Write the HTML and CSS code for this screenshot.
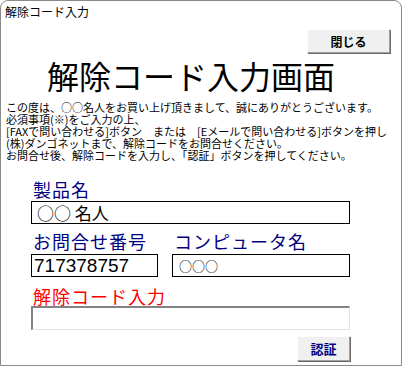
FILE: index.html
```html
<!DOCTYPE html>
<html lang="ja">
<head>
  <meta charset="UTF-8" />
  <meta name="viewport" content="width=device-width, initial-scale=1" />
  <title>解除コード入力</title>
  <link rel="stylesheet" href="styles.css">
</head>
<body>
  <div class="window">
    <div class="titlebar">解除コード入力</div>

    <div class="toolbar">
      <button class="btn close-btn" id="closeBtn">閉じる</button>
    </div>

    <h1>解除コード入力画面</h1>

    <div class="notice">
      この度は、○○名人をお買い上げ頂きまして、誠にありがとうございます。<br>
      必須事項(※)をご入力の上、<br>
      [FAXで問い合わせる]ボタン　または　[Eメールで問い合わせる]ボタンを押し<br>
      (株)ダンゴネットまで、解除コードをお問合せください。<br>
      お問合せ後、解除コードを入力し、「認証」ボタンを押してください。
    </div>

    <div class="form">
      <div class="field">
        <label class="label">製品名</label>
        <div class="box product">○○ 名人</div>
      </div>

      <div class="row">
        <div class="field phone-field">
          <label class="label">お問合せ番号</label>
          <div class="box phone">717378757</div>
        </div>
        <div class="field pc-field">
          <label class="label">コンピュータ名</label>
          <div class="box pc">○○○</div>
        </div>
      </div>

      <div class="field">
        <label class="label red">解除コード入力</label>
        <input class="code-input" type="text" id="codeInput">
      </div>

      <div class="actions">
        <button class="btn auth-btn" id="authBtn">認証</button>
      </div>
    </div>
  </div>
</body>
</html>
```

FILE: styles.css
```css
html, body {
  margin: 0;
  padding: 0;
  background: #fff;
}
body {
  font-family: "Noto Sans CJK JP", "Liberation Sans", sans-serif;
  color: #000;
}
.window {
  box-sizing: border-box;
  width: 402px;
  height: 366px;
  border: 1px solid #8a8a8a;
  border-radius: 8px 8px 0 0;
  background: #fff;
  overflow: hidden;
}
.titlebar {
  font-size: 12px;
  line-height: 16px;
  padding: 3px 0 0 4px;
  height: 24px;
  box-sizing: border-box;
}
.toolbar {
  display: flex;
  justify-content: flex-end;
  padding: 4px 11px 0 0;
}
.btn {
  font-family: "Noto Sans CJK JP", sans-serif;
  font-weight: bold;
  background: #f0f0f0;
  border-top: 1px solid #fff;
  border-left: 1px solid #fff;
  border-right: 1px solid #a0a0a0;
  border-bottom: 1px solid #a0a0a0;
  box-shadow: 1px 1px 0 #696969;
  padding: 0;
  cursor: pointer;
}
.close-btn {
  width: 83px;
  height: 24px;
  font-size: 12px;
  color: #000;
}
h1 {
  font-size: 32px;
  font-weight: normal;
  line-height: 36px;
  margin: 4px 0 0 0;
  padding-left: 46px;
}
.notice {
  font-size: 11px;
  line-height: 12px;
  margin: 8px 0 0 5px;
  white-space: nowrap;
}
.form {
  padding: 18px 0 0 30px;
  width: 319px;
}
.field {
  display: flex;
  flex-direction: column;
}
.label {
  font-size: 18px;
  line-height: 20px;
  letter-spacing: 1px;
  color: #000080;
  padding-left: 2px;
  margin-bottom: 2px;
}
.label.red {
  color: #ff0000;
}
.box {
  box-sizing: border-box;
  height: 23px;
  border: 1px solid #000;
  background: #fff;
  white-space: nowrap;
  overflow: hidden;
}
.product {
  font-size: 17px;
  line-height: 21px;
  padding-left: 5px;
}
.row {
  display: flex;
  gap: 14px;
  margin-top: 7px;
}
.phone-field {
  width: 127px;
}
.pc-field {
  flex: 1;
}
.phone-field .label,
.pc-field .label {
  margin-bottom: 3px;
}
.phone {
  font-family: "Liberation Sans", sans-serif;
  font-size: 19px;
  line-height: 22px;
  padding-left: 2px;
}
.pc {
  font-size: 13px;
  line-height: 21px;
  padding-left: 6px;
}
.row + .field {
  margin-top: 9px;
}
.row + .field .label {
  margin-bottom: 0;
}
.code-input {
  box-sizing: border-box;
  height: 24px;
  width: 100%;
  margin: 0;
  border-top: 2px solid #838383;
  border-left: 2px solid #838383;
  border-right: 1px solid #e3e3e3;
  border-bottom: 1px solid #e3e3e3;
  background: #fff;
  outline: none;
}
.actions {
  display: flex;
  justify-content: flex-end;
  margin-top: 6px;
}
.auth-btn {
  width: 53px;
  height: 25px;
  font-size: 13px;
  color: #000080;
}
```
